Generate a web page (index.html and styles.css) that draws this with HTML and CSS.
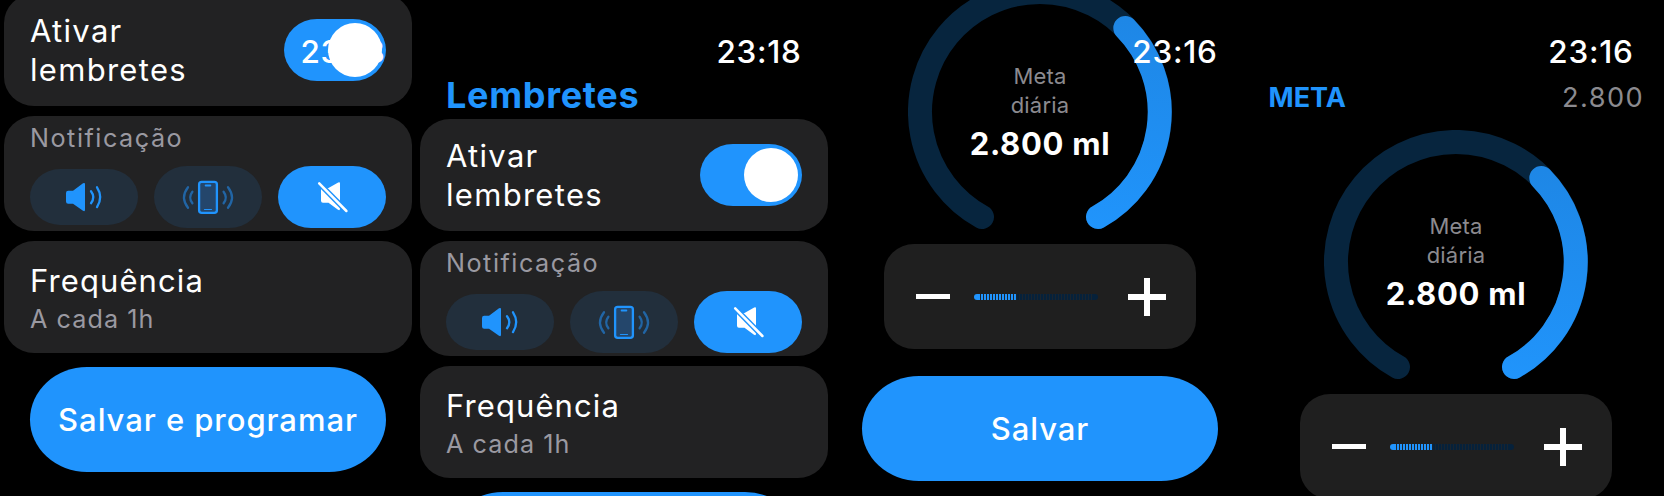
FILE: index.html
```html
<!DOCTYPE html>
<html lang="pt-BR">
<head>
<meta charset="utf-8">
<title>Lembretes e meta</title>
<link rel="stylesheet" href="styles.css">
</head>
<body>
<svg class="defs" aria-hidden="true">
  <defs>
    <symbol id="sound" viewBox="0 0 48 40">
      <path fill="#2094fd" d="M8.2 13.7H13L23 6.3q2-1.2 2 1V32.8q0 2.200-2 1L13 26.700H8.200q-2.200 0-2.200-2.200v-8.600q0-2.200 2.200-2.200z"/>
      <path fill="none" stroke="#2094fd" stroke-width="2.300" stroke-linecap="round" d="M31 14.200q4.600 6 0 12M37 10.300q6.400 9.700 0 19.800"/>
    </symbol>
    <symbol id="vibrate" viewBox="0 0 60 40">
      <rect x="21.100" y="4.800" width="17.800" height="31" rx="2.600" fill="#24466b" stroke="#2094fd" stroke-width="2.300"/>
      <path fill="none" stroke="#2094fd" stroke-linecap="round" stroke-width="1.800" d="M27.600 8.500h4.800"/>
      <path fill="none" stroke="#2094fd" stroke-linecap="round" stroke-width="1.200" d="M26.500 32.500h7"/>
      <path fill="none" stroke="#2165a5" stroke-width="2.300" stroke-linecap="round" d="M14.400 14.700q-4.400 5.800 0 11.600M10 10.200q-8 10.300 0 20.600M45.600 14.700q4.400 5.800 0 11.600M50 10.200q8 10.300 0 20.600"/>
    </symbol>
    <symbol id="mute" viewBox="0 0 48 40">
      <path fill="#fff" d="M13 11h7.500L30.200 5.500q1.800-1 1.800 1V31.500q0 2.500-2 1.200L20.500 25.700H15q-2 0-2-2z"/>
      <path stroke="#2094fd" stroke-width="5.400" d="M9.200 4.300 40.400 36"/>
      <path stroke="#fff" stroke-width="2.500" stroke-linecap="round" d="M11.200 6.300 38.400 34"/>
    </symbol>
    <linearGradient id="level" gradientUnits="userSpaceOnUse" x1="215" y1="40" x2="190" y2="245">
      <stop offset="0" stop-color="#1e87e6"/>
      <stop offset="1" stop-color="#2094fb"/>
    </linearGradient>
    <symbol id="ring" viewBox="0 0 264 264">
      <g fill="none" stroke-width="24" stroke-linecap="round">
        <path stroke="#07253e" d="M74 237A120 120 0 1 1 190 237"/>
        <path stroke="url(#level)" d="M217.300 48A120 120 0 0 1 190 237"/>
      </g>
    </symbol>
    <symbol id="plus" viewBox="0 0 38 38">
      <path fill="#fff" d="M16 0h6v16h16v6H22v16h-6V22H0v-6h16z"/>
    </symbol>
  </defs>
</svg>

<main class="board">
  <section class="screen scrolled-list">
    <time class="clock">23:18</time>
    <div class="card row">
      <span class="label">Ativar<br>lembretes</span>
      <span class="toggle"><i class="knob"></i></span>
    </div>
    <div class="card notify">
      <span class="muted wide">Notificação</span>
      <div class="modes">
        <span class="mode low"><svg width="48" height="40"><use href="#sound"/></svg></span>
        <span class="mode"><svg width="60" height="40"><use href="#vibrate"/></svg></span>
        <span class="mode on"><svg width="48" height="40"><use href="#mute"/></svg></span>
      </div>
    </div>
    <div class="card freq">
      <span class="label">Frequência</span>
      <span class="muted">A cada 1h</span>
    </div>
    <div class="button">Salvar e programar</div>
  </section>

  <section class="screen">
    <time class="clock">23:18</time>
    <h1 class="title">Lembretes</h1>
    <div class="card row">
      <span class="label">Ativar<br>lembretes</span>
      <span class="toggle"><i class="knob"></i></span>
    </div>
    <div class="card notify">
      <span class="muted wide">Notificação</span>
      <div class="modes">
        <span class="mode low"><svg width="48" height="40"><use href="#sound"/></svg></span>
        <span class="mode"><svg width="60" height="40"><use href="#vibrate"/></svg></span>
        <span class="mode on"><svg width="48" height="40"><use href="#mute"/></svg></span>
      </div>
    </div>
    <div class="card freq">
      <span class="label">Frequência</span>
      <span class="muted">A cada 1h</span>
    </div>
    <div class="button"></div>
  </section>

  <section class="screen scrolled-goal">
    <time class="clock">23:16</time>
    <div class="gauge">
      <svg width="264" height="264"><use href="#ring"/></svg>
      <div class="reading">
        <span class="caption">Meta</span>
        <span class="caption">diária</span>
        <strong class="value">2.800 ml</strong>
      </div>
    </div>
    <div class="stepper">
      <i class="minus"></i>
      <i class="slider"></i>
      <svg width="38" height="38"><use href="#plus"/></svg>
    </div>
    <div class="button save">Salvar</div>
  </section>

  <section class="screen">
    <time class="clock">23:16</time>
    <header class="goal-head">
      <span class="goal-name">META</span>
      <span class="goal-number">2.800</span>
    </header>
    <div class="gauge">
      <svg width="264" height="264"><use href="#ring"/></svg>
      <div class="reading">
        <span class="caption">Meta</span>
        <span class="caption">diária</span>
        <strong class="value">2.800 ml</strong>
      </div>
    </div>
    <div class="stepper">
      <i class="minus"></i>
      <i class="slider"></i>
      <svg width="38" height="38"><use href="#plus"/></svg>
    </div>
  </section>
</main>
</body>
</html>
```
FILE: styles.css
```css
* { box-sizing: border-box; }

body {
  margin: 0;
  background: #000;
  color: #fff;
  font-family: Inter, Roboto, sans-serif;
}

svg { display: block; }

.defs { position: absolute; width: 0; height: 0; }

.board {
  display: grid;
  grid-template-columns: repeat(4, 416px);
  height: 496px;
  overflow: hidden;
}

.screen {
  position: relative;
  display: flex;
  flex-direction: column;
  height: 496px;
  padding: 0 4px;
  overflow: hidden;
}

.screen > * { flex-shrink: 0; }

.scrolled-list > .clock + .card { margin-top: -6px; }
.scrolled-goal > .gauge { margin-top: -20px; }

/* The clock floats over the scrolling content. */
.clock {
  position: absolute;
  z-index: 1;
  top: 31.5px;
  right: 30.5px;
  font-size: 31.5px;
  font-weight: 500;
  line-height: 40px;
  letter-spacing: .7px;
}

.title {
  height: 119px;
  margin: 0;
  padding: 75px 26px 0;
  color: #2094fd;
  font-size: 36px;
  font-weight: 700;
  line-height: 40px;
  letter-spacing: .7px;
}

.card {
  height: 112px;
  padding: 0 26px;
  border-radius: 30px / 29px;
  background: #222223;
}

.card + .card { margin-top: 10px; }

.row {
  display: flex;
  align-items: center;
  justify-content: space-between;
}

.label {
  font-size: 31px;
  line-height: 39px;
  letter-spacing: 1.3px;
}

.toggle {
  display: flex;
  justify-content: flex-end;
  width: 102px;
  height: 62px;
  padding: 4px;
  border-radius: 33px / 31px;
  background: #2094fd;
}

.knob {
  width: 54px;
  height: 54px;
  border-radius: 50%;
  background: #fff;
}

.notify {
  display: flex;
  flex-direction: column;
  gap: 13px;
  height: 115px;
  padding-top: 7px;
}

.muted {
  color: #9a99a1;
  font-size: 25.2px;
  line-height: 30px;
  letter-spacing: 1.05px;
}

.wide { letter-spacing: 1.52px; }

.modes {
  display: grid;
  grid-template-columns: repeat(3, 108px);
  gap: 16px;
  align-items: center;
}

.mode {
  display: grid;
  place-items: center;
  height: 62px;
  border-radius: 33px / 31px;
  background: #222f3c;
}

.low { height: 56px; border-radius: 30px / 28px; }
.on { background: #2094fd; }

.freq {
  display: flex;
  flex-direction: column;
  padding-top: 20px;
}

.freq .label { letter-spacing: 1.1px; }
.freq .muted { line-height: 38px; }

.button {
  display: grid;
  place-items: center;
  width: 356px;
  height: 105px;
  margin: 14px auto 0;
  border-radius: 57px / 52.5px;
  background: #2094fd;
  font-size: 31px;
  font-weight: 500;
  letter-spacing: .95px;
}

.save { margin-top: 27px; }

.goal-head {
  display: flex;
  justify-content: space-between;
  height: 130px;
  padding: 81px 16px 0 16.5px;
  line-height: 33px;
}

.goal-name {
  color: #2094fd;
  font-size: 27px;
  font-weight: 700;
}

.goal-number {
  color: #8b8a8f;
  font-size: 27.2px;
  letter-spacing: 1.4px;
}

.gauge {
  display: grid;
  place-items: center;
  height: 264px;
}

.gauge > * { grid-area: 1 / 1; }

.reading {
  display: flex;
  flex-direction: column;
  align-items: center;
}

.caption {
  color: #8b8a8f;
  font-size: 22px;
  line-height: 29px;
  letter-spacing: .2px;
}

.value {
  margin-top: 5px;
  font-size: 31px;
  font-weight: 700;
  line-height: 38px;
  letter-spacing: .7px;
}

.stepper {
  display: flex;
  align-items: center;
  justify-content: space-between;
  width: 312px;
  height: 105px;
  margin: 0 auto;
  padding: 0 30px 0 32px;
  border-radius: 30px / 29px;
  background: #1f1f1f;
}

.minus {
  width: 34px;
  height: 5px;
  background: #fff;
}

.slider {
  width: 124px;
  height: 6px;
  margin-right: 6px;
  border-radius: 3px;
  background:
    repeating-linear-gradient(90deg, #1a242e 0 1px, transparent 1px 3px) 6px 0 / 112px 100% no-repeat,
    linear-gradient(90deg, #2094fd 42px, #06213a 42px);
}
```
